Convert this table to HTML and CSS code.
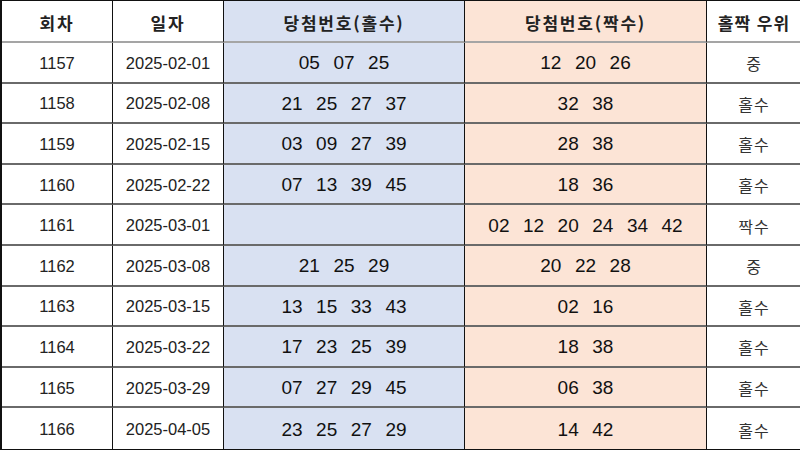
FILE: index.html
```html
<!DOCTYPE html>
<html lang="ko">
<head>
<meta charset="utf-8">
<link rel="stylesheet" href="styles.css">
</head>
<body>
<div class="sheet">
  <div class="cell head">회차</div>
  <div class="cell head">일자</div>
  <div class="cell head odd">당첨번호(홀수)</div>
  <div class="cell head even">당첨번호(짝수)</div>
  <div class="cell head last">홀짝 우위</div>

  <div class="cell num">1157</div><div class="cell date">2025-02-01</div>
  <div class="cell odd balls"><span>05</span><span>07</span><span>25</span></div>
  <div class="cell even balls"><span>12</span><span>20</span><span>26</span></div>
  <div class="cell res last">중</div>

  <div class="cell num">1158</div><div class="cell date">2025-02-08</div>
  <div class="cell odd balls"><span>21</span><span>25</span><span>27</span><span>37</span></div>
  <div class="cell even balls"><span>32</span><span>38</span></div>
  <div class="cell res last">홀수</div>

  <div class="cell num">1159</div><div class="cell date">2025-02-15</div>
  <div class="cell odd balls"><span>03</span><span>09</span><span>27</span><span>39</span></div>
  <div class="cell even balls"><span>28</span><span>38</span></div>
  <div class="cell res last">홀수</div>

  <div class="cell num">1160</div><div class="cell date">2025-02-22</div>
  <div class="cell odd balls"><span>07</span><span>13</span><span>39</span><span>45</span></div>
  <div class="cell even balls"><span>18</span><span>36</span></div>
  <div class="cell res last">홀수</div>

  <div class="cell num">1161</div><div class="cell date">2025-03-01</div>
  <div class="cell odd balls"></div>
  <div class="cell even balls"><span>02</span><span>12</span><span>20</span><span>24</span><span>34</span><span>42</span></div>
  <div class="cell res last">짝수</div>

  <div class="cell num">1162</div><div class="cell date">2025-03-08</div>
  <div class="cell odd balls"><span>21</span><span>25</span><span>29</span></div>
  <div class="cell even balls"><span>20</span><span>22</span><span>28</span></div>
  <div class="cell res last">중</div>

  <div class="cell num">1163</div><div class="cell date">2025-03-15</div>
  <div class="cell odd balls"><span>13</span><span>15</span><span>33</span><span>43</span></div>
  <div class="cell even balls"><span>02</span><span>16</span></div>
  <div class="cell res last">홀수</div>

  <div class="cell num">1164</div><div class="cell date">2025-03-22</div>
  <div class="cell odd balls"><span>17</span><span>23</span><span>25</span><span>39</span></div>
  <div class="cell even balls"><span>18</span><span>38</span></div>
  <div class="cell res last">홀수</div>

  <div class="cell num">1165</div><div class="cell date">2025-03-29</div>
  <div class="cell odd balls"><span>07</span><span>27</span><span>29</span><span>45</span></div>
  <div class="cell even balls"><span>06</span><span>38</span></div>
  <div class="cell res last">홀수</div>

  <div class="cell num">1166</div><div class="cell date">2025-04-05</div>
  <div class="cell odd balls"><span>23</span><span>25</span><span>27</span><span>29</span></div>
  <div class="cell even balls"><span>14</span><span>42</span></div>
  <div class="cell res last">홀수</div>
</div>
</body>
</html>
```

FILE: styles.css
```css
html, body {
  margin: 0;
  padding: 0;
  background: #ffffff;
}
.sheet {
  width: 800px;
  height: 450px;
  box-sizing: border-box;
  display: grid;
  grid-template-columns: 111px 111px 241px 242px 95px;
  grid-template-rows: 42px repeat(10, 1fr);
  border-left: 2px solid #111;
  border-top: 1px solid #111;
  border-bottom: 1px solid #111;
  font-family: "Liberation Sans", Arial, "Noto Sans CJK KR", sans-serif;
  color: #1e1e1e;
}
.cell {
  display: flex;
  align-items: center;
  justify-content: center;
  border-right: 1px solid #111;
  border-bottom: 2px solid #6a6a6a;
  box-sizing: border-box;
  white-space: nowrap;
  padding-top: 2px;
}
.cell.last {
  border-right: 1px solid #e8e8e8;
}
.sheet > .cell:nth-last-child(-n+5) {
  border-bottom: none;
}
.head {
  font-family: "Noto Sans CJK KR", sans-serif;
  font-weight: 700;
  font-size: 17px;
  letter-spacing: 1.8px;
  color: #222;
  border-bottom: 2px solid #a5a5a5;
}
.head.last {
  letter-spacing: 1px;
}
.odd {
  background: #d9e1f2;
}
.even {
  background: #fce4d6;
}
.num, .date {
  font-size: 16.5px;
  color: #222;
}
.balls {
  font-size: 19px;
  gap: 13.5px;
  color: #111;
}
.res {
  font-family: "Noto Sans CJK KR", sans-serif;
  font-size: 16px;
  letter-spacing: 1px;
  color: #333;
}
```
